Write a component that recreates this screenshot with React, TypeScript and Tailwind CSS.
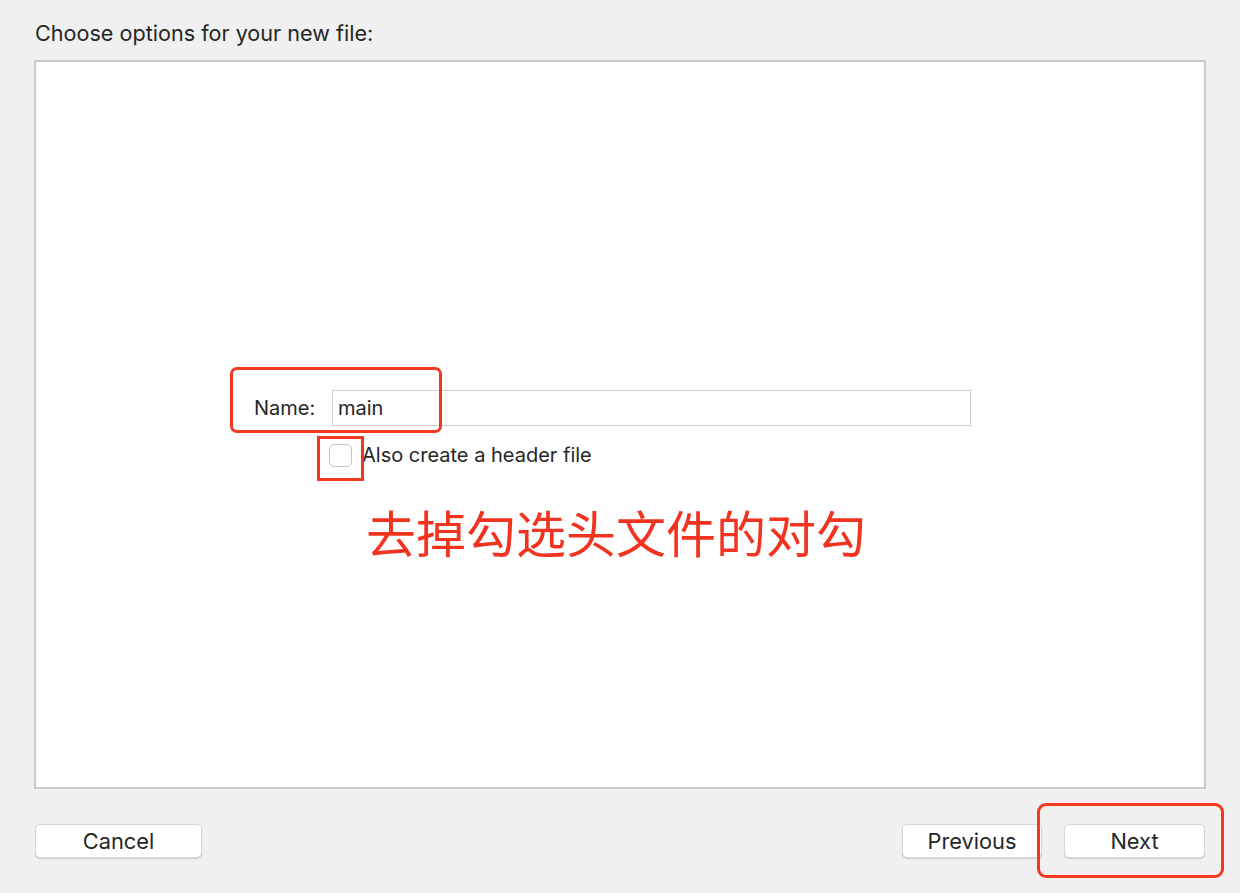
const FONT = "font-['Inter','Liberation_Sans','Noto_Sans_CJK_SC',sans-serif]";

const BUTTON_CLASS =
  "h-[34px] rounded-[5px] bg-white border border-[#d6d6d6] shadow-[0_1px_1px_rgba(0,0,0,0.15)] text-[21.8px] text-[#262626] flex items-center justify-center";

export default function App() {
  return (
    <div className={`w-[1240px] h-[893px] bg-[#f0f0f0] ${FONT} text-[#262626] flex flex-col`}>
      <div className="pt-[19px] pl-[35px] h-[60px] text-[21.6px] leading-[28px]">
        Choose options for your new file:
      </div>

      {/* options panel */}
      <div className="ml-[34px] w-[1172px] h-[729px] bg-white border-2 border-[#c9c9c9] flex flex-col pt-[328px]">
        <div className="flex items-center h-[36px]">
          <div className="relative flex items-center">
            <span className="ml-[218px] w-[78px] text-[20px]">Name:</span>
            <div className="w-[639px] h-[36px] border border-[#cfcfcf] flex items-center pl-[5px] text-[20px]">
              main
            </div>
            <div className="absolute left-[194px] top-[-23px] w-[212px] h-[66px] border-[3px] border-[#f2391f] rounded-[7px]" />
          </div>
        </div>

        <div className="flex items-center mt-[17px] h-[24px]">
          <div className="relative ml-[293px] w-[23px] h-[23px] rounded-[5px] border border-[#c4c4c4] bg-white">
            <div className="absolute left-[-13px] top-[-9px] w-[47px] h-[45px] border-[3px] border-[#f2391f]" />
          </div>
          <span className="ml-[10px] text-[20px]">Also create a header file</span>
        </div>

        <div className="ml-[330px] mt-[32px] text-[50px] leading-[64px] text-[#f2331f] font-['Noto_Sans_CJK_SC',sans-serif]">
          去掉勾选头文件的对勾
        </div>
      </div>

      {/* buttons */}
      <div className="flex items-center mt-[35px] px-[35px]">
        <button className={`${BUTTON_CLASS} w-[167px]`}>Cancel</button>
        <div className="flex-1" />
        <button className={`${BUTTON_CLASS} w-[140px]`}>Previous</button>
        <div className="relative ml-[22px]">
          <button className={`${BUTTON_CLASS} w-[141px]`}>Next</button>
          <div className="absolute left-[-27px] top-[-21px] w-[187px] h-[75px] border-[3px] border-[#f2391f] rounded-[9px]" />
        </div>
      </div>
    </div>
  );
}
